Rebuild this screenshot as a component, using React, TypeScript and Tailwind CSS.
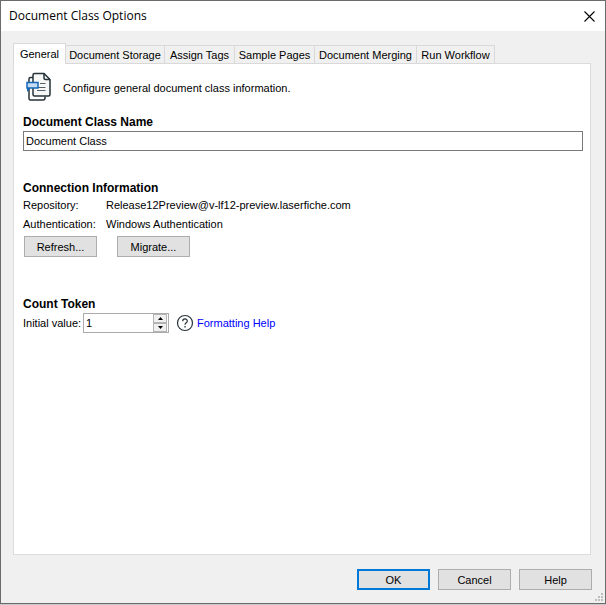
import React, { useState } from 'react';

const tabs = ['General', 'Document Storage', 'Assign Tags', 'Sample Pages', 'Document Merging', 'Run Workflow'];

// Share of the tab strip each label takes
const tabWidths = ['w-[53px]', 'w-[99px]', 'w-[70px]', 'w-[80px]', 'w-[102px]', 'w-[78px]'];

const DocumentIcon = () => (
  <svg width="26" height="30" viewBox="0 0 26 30" fill="none" strokeWidth="1.5" aria-hidden="true">
    <path d="M7 5.500H4.500Q3 5.500 3 7V26.500Q3 28 4.500 28H17Q19 28 19 26V24.500" stroke="#263238" />
    <path d="M8.500 1.500H18L24 7.500V22.500Q24 24 22.500 24H8.500Q7 24 7 22.500V3Q7 1.500 8.500 1.500Z" fill="#f7f7f7" stroke="#263238" />
    <path d="M18 1.500V6Q18 7.500 19.500 7.500H24" stroke="#263238" />
    <path d="M14 11.500H19.500M11 15.500H19.500M11 18.500H19.500" stroke="#555f66" strokeWidth="1" />
    <path d="M1 10.500H12V16H1Z" fill="#c5dcf3" stroke="#1565b8" />
    <path d="M1 16V20L3.500 17.500V16Z" fill="#1565b8" />
  </svg>
);

const HelpIcon = () => (
  <svg width="18" height="18" viewBox="0 0 18 18" fill="none" stroke="#263238" aria-hidden="true">
    <circle cx="9" cy="9" r="7.500" strokeWidth="1.200" />
    <path d="M6.700 7.200C6.700 4.200 11.300 4.200 11.300 7C11.300 8.800 9 8.800 9 10.800" strokeWidth="1.200" />
    <path d="M9 12V13.500" strokeWidth="1.300" />
  </svg>
);

const SizeGrip = () => (
  <svg width="8" height="8" viewBox="0 0 8 8" fill="#bfbfbf" aria-hidden="true">
    <path d="M6 0h2v2h-2zM3 3h2v2h-2zM6 3h2v2h-2zM0 6h2v2h-2zM3 6h2v2h-2zM6 6h2v2h-2z" />
  </svg>
);

const Button = ({ children, primary = false }: { children: React.ReactNode; primary?: boolean }) => (
  <button
    type="button"
    className={
      primary
        ? 'h-[21px] w-[73px] border-2 border-[#0078d7] bg-[#e1e1e1] text-center'
        : 'h-[21px] w-[73px] border border-[#adadad] bg-[#e1e1e1] text-center'
    }
  >
    {children}
  </button>
);

const App = () => {
  const [active, setActive] = useState(0);
  const [name, setName] = useState('Document Class');
  const [count, setCount] = useState(1);

  return (
    <div className="flex min-h-screen flex-col bg-[#c8c8c8] pb-px font-['Liberation_Sans',Arial,sans-serif] text-[11px] leading-4 text-black">
      <div className="relative flex flex-1 flex-col border border-[#6b6b6b] bg-[#f0f0f0]">

        {/* Title bar */}
        <header className="flex h-[30px] items-center justify-between bg-white pr-1.5 pl-2">
          <h1 className="font-['Open_Sans','Noto_Sans',sans-serif] text-[12px]">Document Class Options</h1>
          <button type="button" aria-label="Close" className="p-1">
            <svg width="11" height="11" viewBox="0 0 11 11" stroke="#000" strokeWidth="1.100" aria-hidden="true">
              <path d="M0.500 0.500L10.500 10.500M10.500 0.500L0.500 10.500" />
            </svg>
          </button>
        </header>

        <main className="flex flex-1 flex-col pt-3 pr-[14px] pl-3">
          {/* Tabs */}
          <div role="tablist" className="z-10 -mb-px flex items-end">
            {tabs.map((tab, i) => (
              <button
                key={tab}
                id={`tab-${i}`}
                type="button"
                role="tab"
                aria-selected={i === active}
                aria-controls="tab-panel"
                onClick={() => setActive(i)}
                className={`${tabWidths[i]} whitespace-nowrap border-[#d9d9d9] text-center ${
                  i === active
                    ? 'h-[21px] border-x border-t bg-white'
                    : 'h-[19px] border-y border-r bg-[#f0f0f0]'
                }`}
              >
                {tab}
              </button>
            ))}
          </div>

          <section
            id="tab-panel"
            role="tabpanel"
            aria-labelledby={`tab-${active}`}
            className="flex-1 border border-[#dcdcdc] bg-white pt-2 pr-[7px] pl-[9px]"
          >
            <div className="flex items-center gap-[11px] pl-[3px]">
              <DocumentIcon />
              <p className="pt-0.5">Configure general document class information.</p>
            </div>

            <label htmlFor="class-name" className="mt-3 block text-[12px] font-bold">
              Document Class Name
            </label>
            <input
              id="class-name"
              value={name}
              onChange={(e) => setName(e.target.value)}
              className="mt-px block h-5 w-full border border-[#7a7a7a] bg-white px-0.5 outline-none"
            />

            <h2 className="mt-[29px] text-[12px] font-bold">Connection Information</h2>
            <dl className="grid grid-cols-[83px_1fr] gap-y-[3px] pt-px">
              <dt>Repository:</dt>
              <dd>Release12Preview@v-lf12-preview.laserfiche.com</dd>
              <dt>Authentication:</dt>
              <dd>Windows Authentication</dd>
            </dl>
            <div className="mt-1 flex gap-5 pl-px">
              <Button>Refresh...</Button>
              <Button>Migrate...</Button>
            </div>

            <h2 className="mt-[39px] text-[12px] font-bold">Count Token</h2>
            <div className="mt-px flex items-center">
              <label htmlFor="initial-value" className="w-[60px] whitespace-nowrap">Initial value:</label>
              <div className="flex h-5 w-[86px] border border-[#ababab] bg-white">
                <input
                  id="initial-value"
                  inputMode="numeric"
                  value={count}
                  onChange={(e) => setCount(Number(e.target.value) || 0)}
                  className="min-w-0 flex-1 px-0.5 outline-none"
                />
                <div className="flex w-[15px] flex-col pr-px">
                  <button
                    type="button"
                    aria-label="Increase"
                    onClick={() => setCount(count + 1)}
                    className="flex flex-1 items-center justify-center border border-[#b4b4b4] bg-[#f0f0f0]"
                  >
                    <svg width="5" height="3" viewBox="0 0 5 3" aria-hidden="true"><path d="M0 3L2.500 0L5 3Z" /></svg>
                  </button>
                  <button
                    type="button"
                    aria-label="Decrease"
                    onClick={() => setCount(count - 1)}
                    className="flex flex-1 items-center justify-center border border-[#b4b4b4] bg-[#f0f0f0]"
                  >
                    <svg width="5" height="3" viewBox="0 0 5 3" aria-hidden="true"><path d="M0 0L2.500 3L5 0Z" /></svg>
                  </button>
                </div>
              </div>
              <a href="#formatting-help" className="ml-[7px] flex items-center gap-[3px] text-[#0000ff]">
                <HelpIcon />
                Formatting Help
              </a>
            </div>
          </section>
        </main>

        <footer className="flex justify-end gap-2 pt-[14px] pr-[13px] pb-[13px] pl-3">
          <Button primary>OK</Button>
          <Button>Cancel</Button>
          <Button>Help</Button>
        </footer>

        {/* Resize handle in the window corner */}
        <div className="absolute right-0.5 bottom-0.5">
          <SizeGrip />
        </div>
      </div>
    </div>
  );
};

export default App;
